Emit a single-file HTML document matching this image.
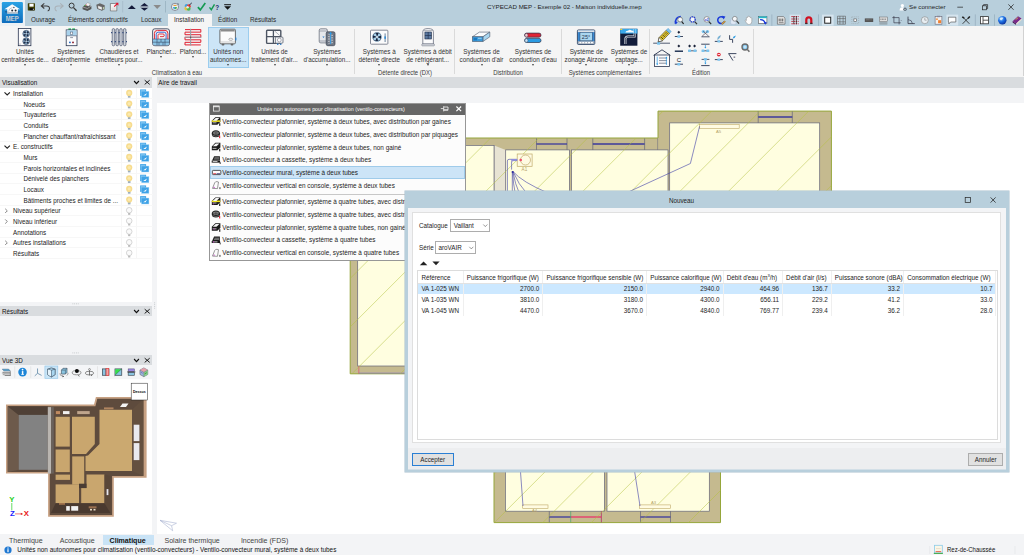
<!DOCTYPE html>
<html lang="fr">
<head>
<meta charset="utf-8">
<title>CYPECAD MEP - Exemple 02 - Maison individuelle.mep</title>
<style>
*{box-sizing:border-box;margin:0;padding:0}
html,body{width:1024px;height:555px;overflow:hidden;background:#fff}
body{font-family:"Liberation Sans",sans-serif;font-size:6.3px;color:#1e1e1e;position:relative;line-height:1}
.abs{position:absolute}
.t{position:absolute;white-space:nowrap;line-height:8px;height:8px}
.c{transform:translateX(-50%);text-align:center}
svg{position:absolute;overflow:visible}
sup{font-size:4.2px;line-height:0;vertical-align:baseline;position:relative;top:-2.2px}
/* header */
#hdr{position:absolute;left:0;top:0;width:1024px;height:26px;background:#b8cfdc}
#logobg{position:absolute;left:0;top:0;width:24.8px;height:26px;background:#ecf1f5}
#tabact{position:absolute;left:168px;top:14px;width:44px;height:12px;background:#f5f5f5}
.tab{position:absolute;top:15.6px;white-space:nowrap;line-height:8px;color:#2b2b2b}
/* ribbon */
#rib{position:absolute;left:0;top:26px;width:1024px;height:51px;background:#f5f5f5}
.rsep{position:absolute;top:3px;width:1px;height:45px;background:#dadada}
.rl{position:absolute;top:22.2px;white-space:nowrap;line-height:8.1px;text-align:center;transform:translateX(-50%);color:#333}
.rg{position:absolute;top:42.9px;white-space:nowrap;line-height:8px;transform:translateX(-50%) scaleX(0.94);color:#3a3a3a;font-size:6.3px}
.dd{position:absolute;width:0;height:0;border-left:1.9px solid transparent;border-right:1.9px solid transparent;border-top:2px solid #444;transform:translateX(-50%)}
.bt{position:absolute;top:1.4px;white-space:nowrap;line-height:9px;font-size:7.05px;color:#444}
/* panels */
.phdr{position:absolute;height:10.4px;background:#d9dcdf}
.phdr .t{top:1.8px;left:2px;color:#111}
</style>
</head>
<body>
<!-- HEADER -->
<div id="hdr">
<div id="logobg"></div>
<div id="tabact"></div>
<div class="tab" style="left:31px">Ouvrage</div>
<div class="tab" style="left:68px">Éléments constructifs</div>
<div class="tab" style="left:141px">Locaux</div>
<div class="tab" style="left:174px">Installation</div>
<div class="tab" style="left:218px">Édition</div>
<div class="tab" style="left:250px">Résultats</div>
<div class="t" style="left:487px;top:3px;font-size:6.2px">CYPECAD MEP - Exemple 02 - Maison individuelle.mep</div>
<div class="t" style="left:909px;top:3px;font-size:6.2px">Se connecter</div>
</div>
<svg id="hicons" width="1024" height="26" viewBox="0 0 1024 26" style="left:0;top:0">
<defs><linearGradient id="lg" x1="0" y1="0" x2="0" y2="1"><stop offset="0" stop-color="#2aa2e4"/><stop offset="1" stop-color="#0e6cbc"/></linearGradient></defs>
<rect x="1.85" y="1.95" width="21.05" height="21.15" rx="1.2" fill="url(#lg)"/>
<path d="M4.4 9.2 L12.2 4.3 L20.1 9.2 L17.9 9.2 L17.9 13.4 H7.2 V9.2 Z" fill="#fafbfc"/>
<path d="M7.2 12 H17.9 V13.5 H7.2 Z" fill="#b9c0c8"/><path d="M4.8 11.2 H7.2 V12.4 H5.4 Z M17.9 11.2 H19.8 L19.2 12.4 H17.9 Z" fill="#1a5a94"/>
<path d="M8.6 11.6 Q8.8 8.2 12.4 7.6" fill="none" stroke="#8a929c" stroke-width="0.5"/>
<circle cx="12.2" cy="10.5" r="1" fill="#1e2630"/><circle cx="15.6" cy="10.5" r="1" fill="#1e2630"/><circle cx="13.9" cy="7.6" r="0.75" fill="#4a525c"/>
<text x="12.25" y="20.9" font-size="7.4" font-weight="bold" text-anchor="middle" fill="#f2f4f6" stroke="#2a5a86" stroke-width="0.2" font-family="Liberation Sans, sans-serif" textLength="12.9" lengthAdjust="spacingAndGlyphs">MEP</text>
<g transform="translate(31.4 6.85)"><rect x="-3.6" y="-3.7" width="7.2" height="7.4" rx="0.5" fill="#3e3e04"/><rect x="-2" y="-3.1" width="4.2" height="2.9" fill="#fff"/><rect x="-1.8" y="1.3" width="4.4" height="2.1" fill="#0a0a0a"/><rect x="1.5" y="1.8" width="0.8" height="1.3" fill="#e8e8e8"/></g>
<g transform="translate(45.5 6.9)"><path d="M-1.2 -3.6 L-4.2 -1 L-1.2 1.6 M-4 -1 H1 Q4 -1 4 1.6 Q4 3.6 2.2 4" fill="none" stroke="#3c3c3c" stroke-width="1.05"/></g>
<g transform="translate(59 6.9)"><path d="M1.2 -3.6 L4.2 -1 L1.2 1.6 M4 -1 H-1 Q-4 -1 -4 1.6 Q-4 3.6 -2.2 4" fill="none" stroke="#a9b1b7" stroke-width="1.05"/></g>
<g transform="translate(72.8 6.9)"><circle cx="-1.2" cy="-1.3" r="2.5" fill="none" stroke="#3a3a3a" stroke-width="1"/><path d="M0.7 0.7 L3.8 3.9" stroke="#3a3a3a" stroke-width="1.3"/></g>
<g transform="translate(87 6.9)"><path d="M-4.4 0 L-1 -2.6 L4.4 -1 L4.4 2 L0.4 4.2 L-4.4 2.4 Z" fill="#555"/><path d="M-2.2 -1.6 L0.6 -4.2 L3.4 -3.2 L1.8 -0.6 Z" fill="#f2f2f2" stroke="#666" stroke-width="0.3"/><path d="M-4.4 0 L0.4 1.6 L4.4 -1" fill="none" stroke="#ddd" stroke-width="0.5"/><circle cx="-2" cy="-1.4" r="0.6" fill="#3c3"/><circle cx="-0.9" cy="-1.9" r="0.5" fill="#e33"/></g>
<g transform="translate(100.5 6.9)"><path d="M-4.2 -2.2 L-0.6 -3.6 L4.2 -1.6 L4.2 2.4 L1.4 3.8 L-3.4 1.8 Z" fill="#666"/><path d="M-2.6 -1.4 L1.6 0.2 L1.6 3.2 L-2.6 1.6 Z" fill="#eee" stroke="#444" stroke-width="0.3"/><path d="M2.4 0.4 L3.8 -0.2 V2 L2.4 2.6 Z" fill="#bca"/></g>
<g transform="translate(114 6.9)"><path d="M-3.6 -3.4 H1.4 L2.8 -2 V4 H-3.6 Z" fill="#f4f4f4" stroke="#555" stroke-width="0.6"/><path d="M0.2 -0.2 L3 -3" stroke="#e0102a" stroke-width="1.2"/><path d="M1.4 -4.2 H4.4 V-1.2 Z" fill="#e0102a"/><path d="M-2.4 1.2 H1.6 M-2.4 2.4 H1.6" stroke="#bbb" stroke-width="0.4"/></g>
<rect x="122.5" y="1" width="0.6" height="11.5" fill="#9db3c2"/>
<g transform="translate(131.8 6.9)"><path d="M-4 2.2 L0 -1.6 L4 2.2 Z" fill="#141a3a"/></g>
<g transform="translate(144.4 6.9)"><path d="M-3.8 -0.9 L0 -3.9 L3.8 -0.9 Z M-3.8 0.9 L0 3.9 L3.8 0.9 Z" fill="#141a3a"/><rect x="-3.8" y="-0.5" width="7.6" height="1" fill="#141a3a"/><rect x="-3.8" y="-0.95" width="7.6" height="0.45" fill="#dfe9f0"/><rect x="-3.8" y="0.5" width="7.6" height="0.45" fill="#dfe9f0"/></g>
<g transform="translate(157.2 6.9)"><path d="M-3.8 -2 L0 2.2 L3.8 -2 Z" fill="#8a8a8a"/></g>
<rect x="165.1" y="1" width="0.6" height="11.5" fill="#8ea6b6"/>
<g transform="translate(175 6.9)"><circle r="3.6" fill="#e8eef2" stroke="#556" stroke-width="0.6"/><path d="M-2 -1 A2.4 2.4 0 0 1 2 -1 Z" fill="#e8a040"/><path d="M-2 0 A2.4 2.4 0 0 0 0 2.4 V0 Z" fill="#40a0e0"/><path d="M0 2.4 A2.4 2.4 0 0 0 2 0 H0 Z" fill="#50b850"/><path d="M2.6 -3.4 L3.8 -2.6" stroke="#334" stroke-width="0.7"/></g>
<g transform="translate(187.6 6.9)"><circle cx="-1" cy="-1" r="2" fill="#40a0e0"/><circle cx="1.2" cy="-0.6" r="2" fill="#e84040"/><circle cx="-1.2" cy="1.6" r="2" fill="#e8c040"/><circle cx="1" cy="1.8" r="2" fill="#50b850"/><circle cx="0" cy="0.4" r="1.2" fill="#dfe9f0"/><path d="M1.5 -1.6 L4.2 -4" stroke="#223" stroke-width="0.9"/></g>
<g transform="translate(201.5 6.9)"><path d="M-3.6 0.2 L-1.2 3 L3.8 -3.8" fill="none" stroke="#159a52" stroke-width="1.7"/></g>
<g transform="translate(213.5 6.9)"><path d="M-4 0.4 L-2.2 2.8 L1 -2.6" fill="none" stroke="#159a52" stroke-width="1.4"/></g>
<text x="215.2" y="10.4" font-size="6.4" font-weight="bold" fill="#1a2a6a" font-family="Liberation Sans, sans-serif">?</text>
<g transform="translate(227.6 6.9)"><rect x="-3.4" y="-2.7" width="6.8" height="1" fill="#111"/><path d="M-3.4 -0.7 L0 2.9 L3.4 -0.7 Z" fill="#111"/></g>
<g transform="translate(903 7.2)"><circle cx="-0.6" cy="-1.6" r="1.6" fill="#fff"/><path d="M-3.4 3.2 Q-3.4 0 -0.6 0 Q2.2 0 2.2 3.2 Z" fill="#fff"/><circle cx="2" cy="2" r="1.7" fill="#5a6a78"/><rect x="1.3" y="1.7" width="1.4" height="0.7" fill="#fff"/></g>
<path d="M957.3 7.2 H963" stroke="#222" stroke-width="0.7"/>
<rect x="982.4" y="5.8" width="4" height="4" fill="none" stroke="#222" stroke-width="0.7"/><path d="M983.6 5.8 V4.6 H987.6 V8.6 H986.4" fill="none" stroke="#222" stroke-width="0.7"/>
<path d="M1008.4 4.4 L1013.6 9.8 M1013.6 4.4 L1008.4 9.8" stroke="#222" stroke-width="0.75"/>
<rect x="789.6" y="14.6" width="11" height="11" fill="#d5e4ee"/>
<rect x="822" y="14.6" width="11.6" height="11" fill="#d5e4ee"/>
<rect x="946.4" y="14.6" width="11.8" height="11" fill="#d5e4ee"/>
<rect x="771.6" y="14.4" width="0.6" height="11.4" fill="#8ea6b6"/>
<rect x="818.3000000000001" y="14.4" width="0.6" height="11.4" fill="#8ea6b6"/>
<rect x="974.9000000000001" y="14.4" width="0.6" height="11.4" fill="#8ea6b6"/>
<rect x="994.3000000000001" y="14.4" width="0.6" height="11.4" fill="#8ea6b6"/>
<g transform="translate(679.4 20.2)"><path d="M-4 3.6 Q-4.4 -3.4 1.4 -3.8" fill="none" stroke="#1a3ad8" stroke-width="1.5"/><path d="M-4.6 1 L-3.6 4.2 L-1.6 1.8 Z" fill="#1a3ad8"/><circle cx="0.8" cy="-0.6" r="2.4" fill="#f6f8fa" stroke="#555" stroke-width="0.6"/><path d="M2.4 1.4 L4.2 3.8" stroke="#222" stroke-width="1.2"/></g>
<g transform="translate(693 20.2)"><circle cx="-0.4" cy="-0.8" r="2.8" fill="#f6f8fa" stroke="#777" stroke-width="0.7"/><path d="M1.7 1.4 L4 4" stroke="#333" stroke-width="1.2"/><circle cx="-0.4" cy="-0.8" r="2.6" fill="none" stroke="#2040e0" stroke-width="1.3" stroke-dasharray="1.3 0.9"/></g>
<g transform="translate(707.2 20.2)"><circle cx="-0.4" cy="-0.8" r="2.8" fill="#f6f8fa" stroke="#777" stroke-width="0.7"/><path d="M1.7 1.4 L4 4" stroke="#333" stroke-width="1.2"/><text x="-2.4" y="0.6" font-size="3.6" font-weight="bold" fill="#2040d0" font-family="Liberation Sans, sans-serif">x2</text></g>
<g transform="translate(721 20.2)"><path d="M2.6 -2.4 A3.4 3.4 0 1 0 3.2 1.4" fill="none" stroke="#1a3ad8" stroke-width="1.5"/><path d="M1 -4.4 L4.4 -3.6 L2.6 -0.8 Z" fill="#1a3ad8"/><path d="M0.4 3.4 L3.6 0.6 L4.6 1.6 L1.4 4.4 Z" fill="#d8a038" stroke="#7a5a18" stroke-width="0.3"/></g>
<g transform="translate(734.8 20.2)"><rect x="-4" y="-1" width="5" height="5" fill="#dfe8f4" stroke="#8aa0c8" stroke-width="0.4" stroke-dasharray="0.8 0.6"/><circle cx="0" cy="-1.4" r="2.4" fill="#f6f8fa" stroke="#777" stroke-width="0.7"/><path d="M1.8 0.6 L4.2 3.4" stroke="#333" stroke-width="1.2"/></g>
<g transform="translate(749 20.2)"><path d="M-2.6 0.4 V-2.6 Q-2 -3.4 -1.4 -2.6 V-3.6 Q-0.7 -4.4 0 -3.6 V-3.2 Q0.7 -4 1.4 -3.2 V-2.4 Q2.1 -3 2.8 -2.2 V1.6 Q2.6 4 0.6 4.2 H-0.6 Q-2 4 -3 2 L-4 0.2 Q-3.4 -0.6 -2.6 0.4 Z" fill="#fdfdfd" stroke="#888" stroke-width="0.5"/></g>
<g transform="translate(762.7 20.2)"><rect x="-4.2" y="-3.8" width="8.4" height="7" fill="#fff" stroke="#555" stroke-width="0.6"/><rect x="-4.2" y="-3.8" width="8.4" height="1.8" fill="#28b8c8"/><path d="M-2.6 -0.6 Q2 -0.8 2.6 3.6" fill="none" stroke="#1a3ad8" stroke-width="1.2"/><path d="M1 2 L2.8 4.6 L4.2 1.8 Z" fill="#1a3ad8"/></g>
<g transform="translate(781.2 20.2)"><path d="M-3.8 -3.6 H2.2 L3.8 -2 V4 H-3.8 Z" fill="#e8e8e8" stroke="#555" stroke-width="0.6"/><path d="M-2.6 -1 H2.6 M-2.6 0.6 H2.6" stroke="#333" stroke-width="0.9" stroke-dasharray="1.2 0.5"/><path d="M-2.4 2.4 H2.4" stroke="#666" stroke-width="0.7"/></g>
<g transform="translate(795 20.2)"><path d="M-3.6 -3.6 H3.6 M-3.6 -1.2 H3.6 M-3.6 1.2 H3.6 M-3.6 3.6 H3.6" stroke="#c01828" stroke-width="1" stroke-dasharray="1.4 0.7"/><path d="M-1.2 -4 V4 M1.4 -4 V4" stroke="#3a2a2a" stroke-width="0.8"/></g>
<g transform="translate(808.8 20.2)"><path d="M-3.6 3.8 V-0.4 A3.6 3.6 0 0 1 3.6 -0.4 V3.8 H1.4 V-0.2 A1.4 1.4 0 0 0 -1.4 -0.2 V3.8 Z" fill="#d01020"/><rect x="-3.6" y="2.6" width="2.2" height="1.3" fill="#333"/><rect x="1.4" y="2.6" width="2.2" height="1.3" fill="#333"/></g>
<g transform="translate(827.7 20.2)"><rect x="-3" y="-3" width="6" height="6" fill="#fff" stroke="#222" stroke-width="1"/></g>
<g transform="translate(841.5 20.2)"><path d="M-4 -1.6 H4 M-4 1.6 H4 M-1.6 -4 V4 M1.6 -4 V4 M-4 -4 H4 V4 H-4 Z" fill="none" stroke="#555" stroke-width="0.55"/></g>
<g transform="translate(855.2 20.2)"><rect x="-1.3" y="-1.3" width="2.6" height="2.6" fill="#fff" stroke="#555" stroke-width="0.6"/><rect x="-3.4" y="-3.4" width="6.8" height="6.8" fill="none" stroke="#888" stroke-width="0.5" stroke-dasharray="0.7 1.3"/></g>
<g transform="translate(869 20.2)"><rect x="-4.2" y="-1.8" width="8.4" height="3.6" fill="#555"/><path d="M-3 -0.4 H3" stroke="#ccc" stroke-width="0.5" stroke-dasharray="0.6 0.6"/></g>
<g transform="translate(883.4 20.2)"><rect x="-4" y="-3.2" width="8" height="4.6" fill="#ddd" stroke="#666" stroke-width="0.5"/><path d="M-3 -1 H3" stroke="#555" stroke-width="0.8" stroke-dasharray="1 0.5"/><path d="M-4 2.6 H4 M-4 3.8 H4" stroke="#666" stroke-width="0.5"/></g>
<g transform="translate(896.5 20.2)"><path d="M-2.6 -4.2 V2.6 H4.2 M-4.2 -2.6 H2.6 V4.2" fill="none" stroke="#334" stroke-width="0.65"/><circle cx="4.6" cy="0.4" r="0.4" fill="#334"/></g>
<g transform="translate(911 20.2)"><path d="M-3 -3.6 V3.4 H3.8" fill="none" stroke="#334" stroke-width="0.8"/><path d="M-3 -0.6 Q1.2 -0.4 1.4 3.4" fill="none" stroke="#334" stroke-width="0.6"/></g>
<g transform="translate(924.8 20.2)"><circle r="3.5" fill="#e8eef2" stroke="#888" stroke-width="0.6"/><path d="M0 0 V-2.4 M0 0 H1.8" stroke="#777" stroke-width="0.5"/></g>
<g transform="translate(938.5 20.2)"><rect x="-3.4" y="-3.8" width="6.8" height="7.8" fill="#f0f0f0" stroke="#667" stroke-width="0.6"/><rect x="-1.6" y="-4.4" width="3.2" height="1.4" fill="#889"/><rect x="-0.4" y="0" width="3" height="3" fill="#f08030"/><rect x="-2.6" y="-1.8" width="2" height="1.6" fill="#f0a060"/></g>
<g transform="translate(952 20.2)"><path d="M-3.6 -3 H3.8 V1.8 H-1.4 L-3.2 3.8 V1.8 H-3.6 Z" fill="#fff" stroke="#444" stroke-width="0.6"/></g>
<g transform="translate(966 20.2)"><path d="M-3.2 -3.2 L3.4 3.6 M3.4 -3.4 L-3.4 3.6" stroke="#222" stroke-width="0.8"/><path d="M-3.8 -3.4 L-1.8 -2.2 M3.8 -3.8 L2 -1.8" stroke="#222" stroke-width="1.5"/></g>
<g transform="translate(984.4 20.2)"><rect x="-4" y="-3.6" width="8" height="7.2" fill="#fff" stroke="#333" stroke-width="0.8"/><path d="M-1.4 -3.6 V3.6 M-1.4 0 H4" stroke="#333" stroke-width="0.8"/></g>
<defs><radialGradient id="gl" cx="0.35" cy="0.3" r="0.8"><stop offset="0" stop-color="#8fd0ff"/><stop offset="0.5" stop-color="#1a6ae0"/><stop offset="1" stop-color="#0a2a90"/></radialGradient></defs>
<g transform="translate(1002.3 20.2)"><circle r="4.2" fill="url(#gl)"/><path d="M-2.6 -1.6 Q-1 -3.4 1 -2.4 Q0.4 -0.6 -1 0 Q-2.4 0 -2.6 -1.6 Z" fill="#e8f4ff" opacity="0.85"/></g>
<g transform="translate(1017 20.2)"><path d="M-4.4 1 L1 -4 L4.6 -1.6 L-0.8 3.4 Z" fill="#7a2a8a"/><path d="M-4.4 1 L-0.8 3.4 L-0.8 4.8 L-4.4 2.4 Z" fill="#4a1a5a"/><path d="M-0.8 3.4 L4.6 -1.6 V-0.2 L-0.8 4.8 Z" fill="#e8e0d0"/><path d="M-1.4 -0.6 L1.2 -2.6" stroke="#e8c040" stroke-width="0.8"/></g>
</svg>
<!-- RIBBON -->
<div id="rib">
<div class="abs" style="left:208.4px;top:1.2px;width:40.2px;height:41px;background:#cce5f7;border:0.6px solid #9ccdee"></div>
<div class="rl" style="left:25px">Unités<br>centralisées de...</div><div class="dd" style="left:25px;top:38.3px"></div>
<div class="rl" style="left:71px">Systèmes<br>d'aérothermie</div><div class="dd" style="left:71px;top:38.3px"></div>
<div class="rl" style="left:119px">Chaudières et<br>émetteurs pour...</div><div class="dd" style="left:119px;top:38.3px"></div>
<div class="rl" style="left:161.4px">Plancher...</div><div class="dd" style="left:161.4px;top:30.2px"></div>
<div class="rl" style="left:193px">Plafond...</div><div class="dd" style="left:193px;top:30.2px"></div>
<div class="rl" style="left:228.3px">Unités non<br>autonomes...</div><div class="dd" style="left:228.3px;top:38.3px"></div>
<div class="rl" style="left:274.5px">Unités de<br>traitement d'air...</div><div class="dd" style="left:274.5px;top:38.3px"></div>
<div class="rl" style="left:327px">Systèmes<br>d'accumulation...</div><div class="dd" style="left:327px;top:38.3px"></div>
<div class="rl" style="left:379.3px">Systèmes à<br>détente directe</div><div class="dd" style="left:379.3px;top:38.3px"></div>
<div class="rl" style="left:427.7px">Systèmes à débit<br>de réfrigérant...</div><div class="dd" style="left:427.7px;top:38.3px"></div>
<div class="rl" style="left:481.5px">Systèmes de<br>conduction d'air</div><div class="dd" style="left:481.5px;top:38.3px"></div>
<div class="rl" style="left:533px">Systèmes de<br>conduction d'eau</div><div class="dd" style="left:533px;top:38.3px"></div>
<div class="rl" style="left:586.3px">Système de<br>zonage Airzone</div><div class="dd" style="left:586.3px;top:38.3px"></div>
<div class="rl" style="left:629px">Systèmes de<br>captage...</div><div class="dd" style="left:629px;top:38.3px"></div>
<div class="rsep" style="left:354.0px"></div>
<div class="rsep" style="left:454.0px"></div>
<div class="rsep" style="left:561.0px"></div>
<div class="rsep" style="left:649.0px"></div>
<div class="rsep" style="left:753.0px"></div>
<div class="rg" style="left:177px">Climatisation à eau</div>
<div class="rg" style="left:405px">Détente directe (DX)</div>
<div class="rg" style="left:507.5px">Distribution</div>
<div class="rg" style="left:605px">Systèmes complémentaires</div>
<div class="rg" style="left:701px">Édition</div>
</div>
<svg id="ricons" width="1024" height="51" viewBox="0 26 1024 51" style="left:0;top:26px">
<rect x="18.3" y="28.5" width="12.6" height="17.2" fill="#fbfbfc" stroke="#2a3650" stroke-width="0.8"/>
<circle cx="26.2" cy="33.7" r="3.4" fill="#8fb2cf" stroke="#1c2a44" stroke-width="0.5"/><path d="M26.2 33.7 L28.86 34.83 Q28.44 36.25 26.97 36.48 Z" fill="#1c2a44"/><path d="M26.2 33.7 L25.07 36.36 Q23.65 35.94 23.42 34.47 Z" fill="#1c2a44"/><path d="M26.2 33.7 L23.54 32.57 Q23.96 31.15 25.43 30.92 Z" fill="#1c2a44"/><path d="M26.2 33.7 L27.33 31.04 Q28.75 31.46 28.98 32.93 Z" fill="#1c2a44"/><circle cx="26.2" cy="33.7" r="0.75" fill="#dfe8f0"/>
<circle cx="26.2" cy="41.2" r="3.4" fill="#8fb2cf" stroke="#1c2a44" stroke-width="0.5"/><path d="M26.2 41.2 L28.86 42.33 Q28.44 43.75 26.97 43.98 Z" fill="#1c2a44"/><path d="M26.2 41.2 L25.07 43.86 Q23.65 43.44 23.42 41.97 Z" fill="#1c2a44"/><path d="M26.2 41.2 L23.54 40.07 Q23.96 38.65 25.43 38.42 Z" fill="#1c2a44"/><path d="M26.2 41.2 L27.33 38.54 Q28.75 38.96 28.98 40.43 Z" fill="#1c2a44"/><circle cx="26.2" cy="41.2" r="0.75" fill="#dfe8f0"/>
<path d="M20 43.6 V44.6" stroke="#2a3650" stroke-width="0.5"/>
<rect x="68.4" y="28.4" width="2.6" height="1.6" fill="#2eb860"/><rect x="72.2" y="28.4" width="2.8" height="1.6" fill="#2eb860"/>
<rect x="66.2" y="29.9" width="10.8" height="15.8" fill="#fbfbfc" stroke="#2a3650" stroke-width="0.8"/>
<rect x="66.6" y="30.3" width="10" height="5.4" fill="#a9d2ec"/><rect x="70.4" y="32" width="2.4" height="2.6" fill="#fff" stroke="#2a3650" stroke-width="0.4"/>
<path d="M66.4 35.8 H76.8" stroke="#2a3650" stroke-width="0.5"/><path d="M70.2 37.6 H73" stroke="#2a3650" stroke-width="0.5"/>
<circle cx="69.9" cy="42.4" r="0.95" fill="#2a6ac0"/><circle cx="73" cy="42.4" r="0.95" fill="#8a2030"/>
<rect x="112.20" y="28.6" width="2.5" height="17.2" rx="1.2" fill="#ced3dc" stroke="#2a3650" stroke-width="0.55"/>
<rect x="115.95" y="28.6" width="2.5" height="17.2" rx="1.2" fill="#ced3dc" stroke="#2a3650" stroke-width="0.55"/>
<rect x="119.70" y="28.6" width="2.5" height="17.2" rx="1.2" fill="#ced3dc" stroke="#2a3650" stroke-width="0.55"/>
<rect x="123.45" y="28.6" width="2.5" height="17.2" rx="1.2" fill="#ced3dc" stroke="#2a3650" stroke-width="0.55"/>
<path d="M111 32.6 H127 M111 41.6 H127" stroke="#3a5080" stroke-width="1.3" stroke-dasharray="1.25 2.5"/>
<rect x="152.6" y="28.8" width="16.9" height="16.9" rx="2.2" fill="#f2f2f2" stroke="#2a3650" stroke-width="0.8"/>
<path d="M153 39 H169.1 V43.6 Q169.1 45.3 167.4 45.3 H154.7 Q153 45.3 153 43.6 Z" fill="#8cc4e6"/>
<path d="M153 39 H169.1 M153 42.2 H169.1 M157 39 V45.3 M161 39 V42.2 M165 39 V45.3 M159 42.2 V45.3 M163 42.2 V45.3" stroke="#2a3650" stroke-width="0.5" fill="none"/>
<path d="M154.4 39 V33.4 Q154.4 30.4 157.4 30.4 H165 Q167.9 30.4 167.9 33.4 V39" fill="none" stroke="#e02838" stroke-width="1"/>
<path d="M156.2 39 V34.2 Q156.2 32.2 158.2 32.2 H164.2 Q166.1 32.2 166.1 34.2 V39" fill="none" stroke="#2a5ad0" stroke-width="0.9"/>
<path d="M158 39 V35.2 Q158 34 159.2 34 H163 Q164.3 34 164.3 35.2 Q164.3 36.6 163 36.6 H160" fill="none" stroke="#e02838" stroke-width="0.9"/>
<g stroke="#e02838" stroke-width="1.05" fill="none">
<path d="M185 29.60 H200.8"/>
<path d="M185 32.15 H200.8"/>
<path d="M185 34.70 H200.8"/>
<path d="M185 37.25 H200.8"/>
<path d="M185 39.80 H200.8"/>
<path d="M185 42.35 H200.8"/>
<path d="M185 44.90 H200.8"/>
<path d="M200.8 29.6 V32.15 M185 32.15 V34.7 M200.8 34.7 V37.25 M185 37.25 V39.8 M200.8 39.8 V42.35 M185 42.35 V44.9"/>
</g>
<path d="M190.6 28.8 V45.6 M184.4 37.3 H201.4" stroke="#9aa0a8" stroke-width="1.1"/><circle cx="190.6" cy="37.3" r="0.7" fill="#555"/>
<rect x="219.9" y="29.2" width="15.5" height="14.6" rx="1" fill="#fbfbfb" stroke="#4a4a4a" stroke-width="0.8"/>
<rect x="220.6" y="29.6" width="14.1" height="1.9" fill="#8a8a8a"/>
<rect x="221.6" y="43.8" width="2.8" height="1.8" rx="0.8" fill="#666"/><rect x="230.6" y="43.8" width="2.8" height="1.8" rx="0.8" fill="#666"/>
<ellipse cx="230.8" cy="39.3" rx="2" ry="1.1" fill="#f4f4f4" stroke="#555" stroke-width="0.4"/>
<rect x="235.2" y="37.6" width="1.2" height="2.8" fill="#2a7ac8"/><path d="M220.4 42 H235" stroke="#999" stroke-width="0.5"/>
<rect x="266.6" y="30.2" width="14.2" height="13.2" rx="0.8" fill="#fafafa" stroke="#4d5563" stroke-width="1.4"/>
<path d="M266.4 36.6 H281 M273.4 30 V43.6" stroke="#4d5563" stroke-width="1.3"/>
<path d="M274.6 31 L279.8 35.6" stroke="#8a919c" stroke-width="0.7"/>
<rect x="275.4" y="37" width="7.6" height="6.2" rx="1" fill="#f2f4f6" stroke="#4d5563" stroke-width="0.7"/><circle cx="279.3" cy="40" r="1.9" fill="#fff" stroke="#667" stroke-width="0.5"/>
<rect x="277" y="43.6" width="1.4" height="1.3" fill="#2a7ac8"/><rect x="280" y="43.6" width="1.4" height="1.3" fill="#2a7ac8"/>
<rect x="319.2" y="28.8" width="8.2" height="14.1" rx="1.6" fill="#e6e8ec" stroke="#5a6270" stroke-width="0.7"/>
<path d="M319.4 31 H327.2 M319.4 41 H327.2" stroke="#5a6270" stroke-width="0.5"/><path d="M322.4 36.6 H324.6 L323.5 38 Z" fill="#2a7ac8"/>
<rect x="326.2" y="31.8" width="8.8" height="13.9" rx="1.6" fill="#707784" stroke="#3a4250" stroke-width="0.7"/>
<path d="M328 34.2 L333 35.4 L328 36.6 L333 37.8 L328 39 L333 40.2 L328 41.4 L333 42.6 L328 43.8" fill="none" stroke="#d8dce2" stroke-width="0.45"/>
<path d="M330.6 44 V33" stroke="#2a9ae8" stroke-width="0.9"/><path d="M329.2 34 L330.6 31.8 L332 34 Z" fill="#2a9ae8"/>
<rect x="370.5" y="30.2" width="17.4" height="14" rx="0.8" fill="#fbfbfc" stroke="#6a7080" stroke-width="0.8"/>
<circle cx="377" cy="36.9" r="4.6" fill="#16223c" stroke="#a9d2ec" stroke-width="0.5"/><path d="M377 36.9 L380.60 38.42 Q380.04 40.36 378.05 40.67 Z" fill="#a9d2ec"/><path d="M377 36.9 L375.48 40.50 Q373.54 39.94 373.23 37.95 Z" fill="#a9d2ec"/><path d="M377 36.9 L373.40 35.38 Q373.96 33.44 375.95 33.13 Z" fill="#a9d2ec"/><path d="M377 36.9 L378.52 33.30 Q380.46 33.86 380.77 35.85 Z" fill="#a9d2ec"/><circle cx="377" cy="36.9" r="1.01" fill="#dfe8f0"/>
<rect x="384.4" y="33.4" width="1.5" height="8.6" fill="#9ab" /><rect x="384.4" y="36.4" width="1.5" height="2.4" fill="#2a8ad8"/>
<path d="M422.8 44 V31.6 Q422.8 28.6 428.1 28.6 Q433.4 28.6 433.4 31.6 V44 Z" fill="#fbfbfc" stroke="#6a7080" stroke-width="0.8"/>
<path d="M423 30.6 H433.2" stroke="#9aa0aa" stroke-width="0.8"/>
<rect x="424.9" y="32" width="6.6" height="7" fill="#5a78a0" stroke="#1c2a44" stroke-width="0.6"/><path d="M428.2 32 V39 M424.9 35.5 H431.5" stroke="#1c2a44" stroke-width="0.6"/>
<rect x="421.8" y="44" width="12.6" height="1.8" rx="0.6" fill="#e8eaee" stroke="#6a7080" stroke-width="0.6"/>
<path d="M472.4 36.8 L479.4 32.1 H489.8 L482.9 36.8 Z" fill="#fbfcfd" stroke="#4a566a" stroke-width="0.6"/>
<path d="M482.9 36.8 L489.8 32.1 V36.8 L482.9 41.5 Z" fill="#a9d6f0" stroke="#4a566a" stroke-width="0.6"/>
<rect x="472.4" y="36.8" width="10.5" height="4.7" fill="#3a9ada" stroke="#4a566a" stroke-width="0.6"/>
<rect x="473.6" y="37.9" width="3.4" height="2.4" fill="#1a78c0"/><path d="M478 38.3 H481.6" stroke="#e8f4fc" stroke-width="0.6"/>
<rect x="524.6" y="33.1" width="16.4" height="4.1" rx="2" fill="#e02434" stroke="#2a3650" stroke-width="0.7"/><rect x="524.9" y="33.4" width="3" height="3.5" rx="1.5" fill="#f0c8cc" stroke="#2a3650" stroke-width="0.4"/>
<rect x="524.6" y="38.4" width="16.4" height="4.1" rx="2" fill="#2a9ae2" stroke="#2a3650" stroke-width="0.7"/><rect x="524.9" y="38.7" width="3" height="3.5" rx="1.5" fill="#c8e2f4" stroke="#2a3650" stroke-width="0.4"/>
<rect x="577.4" y="29.9" width="17.4" height="14.5" rx="1" fill="#3a8ad2" stroke="#2a3650" stroke-width="0.8"/>
<rect x="577.8" y="30.3" width="16.6" height="1.8" fill="#dde2e8"/><rect x="577.8" y="41.2" width="16.6" height="2.8" fill="#aab2be"/>
<rect x="580" y="32.4" width="12.2" height="8.4" fill="#a9d6f0" stroke="#2a3650" stroke-width="0.4"/>
<text x="586" y="38.9" font-size="5.6" text-anchor="middle" fill="#2a3650" font-family="Liberation Sans, sans-serif">25°</text>
<path d="M579.4 42.6 H593" stroke="#fff" stroke-width="1.2" stroke-dasharray="1.9 1"/>
<rect x="620.2" y="28.8" width="17.2" height="16.9" fill="#121c3a"/>
<rect x="620.2" y="28.8" width="17.2" height="4.8" fill="#3aa8ea"/><rect x="620.2" y="28.8" width="2" height="1.2" fill="#f0d040"/>
<path d="M625.4 32.6 Q625.8 30.4 628 30.8 Q629.6 29 631.6 30.6 Q634 30.4 634 32.6 Z" fill="#f4f8fc"/>
<path d="M634.6 33.6 V36.6 H628 Q625.4 36.6 625.4 39.2 V44" fill="none" stroke="#f4f6f8" stroke-width="2"/><path d="M634.6 33.6 V36.6 H628 Q625.4 36.6 625.4 39.2 V44" fill="none" stroke="#121c3a" stroke-width="0.8"/>
<path d="M633.6 29 V33.4 M635.6 29 V33.4" stroke="#cfe6f6" stroke-width="0.5"/>
<path d="M653.2 43.2 H670" stroke="#2a3650" stroke-width="0.8"/><rect x="657.10" y="41.90" width="3" height="2.8" rx="0.5" fill="#7cc4ee"/>
<g transform="translate(658.2 41.8) rotate(-46)"><path d="M0 0 L3.6 -2.3 H14 V2.3 H3.6 Z" fill="#f2d22e" stroke="#1a1a1a" stroke-width="0.5"/><path d="M0 0 L3.6 -2.3 V2.3 Z" fill="#fff" stroke="#1a1a1a" stroke-width="0.45"/><path d="M4.6 -0.75 H13.4 M4.6 0.75 H13.4" stroke="#1a1a1a" stroke-width="0.85" stroke-dasharray="1.6 0.8"/><rect x="14" y="-2.3" width="2.5" height="4.6" fill="#7cc4ee" stroke="#3a86c0" stroke-width="0.35"/></g>
<path d="M653.6 55.4 L662 49.8 L670.4 55.4" fill="none" stroke="#2a3650" stroke-width="0.9"/>
<rect x="654.6" y="55" width="14.8" height="11.4" fill="#fbfbfc" stroke="#2a3650" stroke-width="0.8"/>
<path d="M659 58 H667 M659 60.6 H667 M659 63.2 H667" stroke="#2a3650" stroke-width="0.55"/>
<path d="M657.2 56.6 V64.6 M666.4 57 V65" stroke="#2a9ae2" stroke-width="0.7"/><path d="M656.2 63.4 L657.2 65.2 L658.2 63.4 Z M665.4 58.2 L666.4 56.4 L667.4 58.2 Z" fill="#2a9ae2"/>
<path d="M677.3499999999999 32.2 L678.8 30.750000000000004 L680.25 32.2 L678.8 33.650000000000006 Z" fill="#1a2238"/><path d="M674.8 36.5 H683" stroke="#2a3650" stroke-width="0.9"/><rect x="677.40" y="35.30" width="2.8" height="2.4" rx="0.5" fill="#7cc4ee"/>
<path d="M677.3499999999999 46 L678.8 44.55 L680.25 46 L678.8 47.45 Z" fill="#1a2238"/><path d="M674.8 51.2 H683" stroke="#14284a" stroke-width="1.4"/>
<text x="678.8" y="62.4" font-size="6" text-anchor="middle" fill="#111" font-family="Liberation Sans, sans-serif">C</text><path d="M674.8 64.2 H683" stroke="#2a3650" stroke-width="0.9"/><rect x="677.40" y="63.00" width="2.8" height="2.4" rx="0.5" fill="#7cc4ee"/>
<path d="M688.15 46 L689.6 44.55 L691.0500000000001 46 L689.6 47.45 Z" fill="#1a2238"/><path d="M693.15 46 L694.6 44.55 L696.0500000000001 46 L694.6 47.45 Z" fill="#1a2238"/><path d="M688 50.8 H696.6" stroke="#2a3650" stroke-width="0.8"/><rect x="688.10" y="49.50" width="3" height="2.6" rx="0.5" fill="#7cc4ee"/><rect x="693.50" y="49.50" width="3" height="2.6" rx="0.5" fill="#7cc4ee"/>
<circle cx="703.4" cy="31.6" r="1.7" fill="#7cc4ee"/><circle cx="707.4" cy="31.6" r="1.7" fill="#7cc4ee"/><path d="M702 36.4 L707.6 31.2 M708.8 36.4 L703.2 31.2" stroke="#334" stroke-width="0.6"/><path d="M701.4 36.8 H709.6" stroke="#2a3650" stroke-width="0.8"/>
<path d="M701.2 44.2 H709.6" stroke="#2a3650" stroke-width="0.9"/><path d="M705.4 45 V47.6" stroke="#2a9ae2" stroke-width="0.7"/><path d="M704.4 47 L705.4 48.6 L706.4 47 Z" fill="#2a9ae2"/><path d="M702 50.8 H709" stroke="#2a3650" stroke-width="0.8"/><rect x="701.50" y="49.60" width="3" height="2.4" rx="0.5" fill="#7cc4ee"/><rect x="706.30" y="49.60" width="3" height="2.4" rx="0.5" fill="#7cc4ee"/>
<path d="M701.6 59.4 H709.4" stroke="#2a3650" stroke-width="0.8"/><rect x="703.90" y="58.00" width="3" height="2.4" rx="0.5" fill="#7cc4ee"/><path d="M705.4 60.6 V63.4" stroke="#2a9ae2" stroke-width="0.7"/><path d="M704.4 62.8 L705.4 64.4 L706.4 62.8 Z" fill="#2a9ae2"/><path d="M701.2 65.6 H709.6" stroke="#2a3650" stroke-width="0.9"/>
<path d="M714.8 41.4 H722.8" stroke="#2a3650" stroke-width="0.9"/><rect x="717.40" y="40.20" width="2.8" height="2.4" rx="0.5" fill="#7cc4ee"/><path d="M717.6 39.6 Q717.4 36.4 720.6 35.6 Q720 38.4 717.6 39.6 Z" fill="#7cc4ee" stroke="#4a7090" stroke-width="0.3"/>
<circle cx="718.8" cy="54.6" r="1.9" fill="#e02434"/><rect x="717.6" y="54.2" width="2.4" height="0.8" fill="#fff"/><path d="M714.8 59.6 H722.8" stroke="#2a3650" stroke-width="0.9"/><rect x="717.40" y="58.40" width="2.8" height="2.4" rx="0.5" fill="#7cc4ee"/>
<path d="M729.6 35.2 V39.4 H732.6 V42.8" fill="none" stroke="#2a3650" stroke-width="0.9"/><path d="M732.6 38.4 Q733 36 736 35.4 Q735.4 38 732.6 38.4 Z" fill="#2a9ae2"/>
<path d="M728.6 53.6 H736.4 M728.6 53.6 L733 60.6" fill="none" stroke="#2a3650" stroke-width="0.9"/><rect x="733.6" y="56.4" width="1.6" height="1.6" fill="#889" />
<circle cx="745" cy="47" r="3" fill="#7cc4ee" stroke="#6a6a6a" stroke-width="1.35"/><path d="M743.4 47 H746.6 M745 45.4 V48.6" stroke="#fff" stroke-width="0.7"/><path d="M747.4 49.6 L749.4 51.8" stroke="#6a6a6a" stroke-width="1.5"/>
</svg>
<div class="abs" id="redge" style="left:1023.2px;top:26px;width:0.8px;height:49.6px;background:#d2d2d2"></div>
<!-- PANELS -->
<div class="abs" style="left:0;top:77px;width:1024px;height:478px;background:#f3f4f6"></div>
<div class="phdr" style="left:0;top:77px;width:152px;height:10.6px"><div class="t">Visualisation</div><svg width="20" height="10.6" viewBox="0 0 20 10.6" style="left:132px;top:0"><path d="M2.1 4 L4.5 6.6 L6.9 4" fill="none" stroke="#111" stroke-width="1.15"/><path d="M12.7 3.2 L17.7 7.4 M17.7 3.2 L12.7 7.4" stroke="#111" stroke-width="0.95"/></svg></div>
<div class="phdr" style="left:156.7px;top:77px;width:868px;height:10.6px"><div class="t" style="left:1.6px">Aire de travail</div></div>
<div class="abs" id="tree" style="left:0;top:88px;width:152px;height:214px;background:#fff">
<div class="abs" style="left:121px;top:0;width:0.6px;height:170.6px;background:#f6f6f6"></div>
<div class="abs" style="left:136px;top:0;width:0.6px;height:170.6px;background:#f6f6f6"></div>
<div class="abs" style="left:0;top:9.87px;width:153px;height:0.6px;background:#f7f7f7"></div>
<div class="t" style="left:13px;top:2.00px;color:#1a1a1a">Installation</div>
<div class="abs" style="left:0;top:20.53px;width:153px;height:0.6px;background:#f7f7f7"></div>
<div class="t" style="left:23.5px;top:12.67px;color:#1a1a1a">Noeuds</div>
<div class="abs" style="left:0;top:31.20px;width:153px;height:0.6px;background:#f7f7f7"></div>
<div class="t" style="left:23.5px;top:23.33px;color:#1a1a1a">Tuyauteries</div>
<div class="abs" style="left:0;top:41.87px;width:153px;height:0.6px;background:#f7f7f7"></div>
<div class="t" style="left:23.5px;top:34.00px;color:#1a1a1a">Conduits</div>
<div class="abs" style="left:0;top:52.54px;width:153px;height:0.6px;background:#f7f7f7"></div>
<div class="t" style="left:23.5px;top:44.67px;color:#1a1a1a">Plancher chauffant/rafraîchissant</div>
<div class="abs" style="left:0;top:63.20px;width:153px;height:0.6px;background:#f7f7f7"></div>
<div class="t" style="left:13px;top:55.34px;color:#1a1a1a">E. constructifs</div>
<div class="abs" style="left:0;top:73.87px;width:153px;height:0.6px;background:#f7f7f7"></div>
<div class="t" style="left:23.5px;top:66.00px;color:#1a1a1a">Murs</div>
<div class="abs" style="left:0;top:84.54px;width:153px;height:0.6px;background:#f7f7f7"></div>
<div class="t" style="left:23.5px;top:76.67px;color:#1a1a1a">Parois horizontales et inclinées</div>
<div class="abs" style="left:0;top:95.20px;width:153px;height:0.6px;background:#f7f7f7"></div>
<div class="t" style="left:23.5px;top:87.34px;color:#1a1a1a">Dénivelé des planchers</div>
<div class="abs" style="left:0;top:105.87px;width:153px;height:0.6px;background:#f7f7f7"></div>
<div class="t" style="left:23.5px;top:98.00px;color:#1a1a1a">Locaux</div>
<div class="abs" style="left:0;top:116.54px;width:153px;height:0.6px;background:#f7f7f7"></div>
<div class="t" style="left:23.5px;top:108.67px;color:#1a1a1a">Bâtiments proches et limites de ...</div>
<div class="abs" style="left:0;top:127.20px;width:153px;height:0.6px;background:#f7f7f7"></div>
<div class="t" style="left:13px;top:119.34px;color:#1a1a1a">Niveau supérieur</div>
<div class="abs" style="left:0;top:137.87px;width:153px;height:0.6px;background:#f7f7f7"></div>
<div class="t" style="left:13px;top:130.00px;color:#1a1a1a">Niveau inférieur</div>
<div class="abs" style="left:0;top:148.54px;width:153px;height:0.6px;background:#f7f7f7"></div>
<div class="t" style="left:13px;top:140.67px;color:#1a1a1a">Annotations</div>
<div class="abs" style="left:0;top:159.20px;width:153px;height:0.6px;background:#f7f7f7"></div>
<div class="t" style="left:13px;top:151.34px;color:#1a1a1a">Autres installations</div>
<div class="abs" style="left:0;top:169.87px;width:153px;height:0.6px;background:#f7f7f7"></div>
<div class="t" style="left:13px;top:162.00px;color:#1a1a1a">Résultats</div>
<svg width="153" height="214" viewBox="0 0 153 214" style="left:0;top:0"><path d="M4.5 4.30 L7.2 6.90 L9.9 4.30" fill="none" stroke="#222" stroke-width="1.15"/><rect x="127.9" y="7.10" width="2.6" height="2.6" fill="#9fb0bd"/><circle cx="129.2" cy="4.90" r="3.1" fill="#f7dc8e"/><circle cx="129.2" cy="4.90" r="1.6" fill="#fbe9ae"/><rect x="140.1" y="1.40" width="6" height="6.5" fill="#4aa9e9"/><rect x="141.7" y="3.40" width="7.2" height="5.9" fill="#3fa2e6" stroke="#8ccbf3" stroke-width="0.4"/><path d="M143.2 7.60 L147 5.20 L145.6 7.60 Z" fill="#fff"/><rect x="141" y="2.30" width="4" height="0.7" fill="#8ccbf3"/><rect x="127.9" y="17.77" width="2.6" height="2.6" fill="#9fb0bd"/><circle cx="129.2" cy="15.57" r="3.1" fill="#f7dc8e"/><circle cx="129.2" cy="15.57" r="1.6" fill="#fbe9ae"/><rect x="140.1" y="12.07" width="6" height="6.5" fill="#4aa9e9"/><rect x="141.7" y="14.07" width="7.2" height="5.9" fill="#3fa2e6" stroke="#8ccbf3" stroke-width="0.4"/><path d="M143.2 18.27 L147 15.87 L145.6 18.27 Z" fill="#fff"/><rect x="141" y="12.97" width="4" height="0.7" fill="#8ccbf3"/><rect x="127.9" y="28.43" width="2.6" height="2.6" fill="#9fb0bd"/><circle cx="129.2" cy="26.23" r="3.1" fill="#f7dc8e"/><circle cx="129.2" cy="26.23" r="1.6" fill="#fbe9ae"/><rect x="140.1" y="22.73" width="6" height="6.5" fill="#4aa9e9"/><rect x="141.7" y="24.73" width="7.2" height="5.9" fill="#3fa2e6" stroke="#8ccbf3" stroke-width="0.4"/><path d="M143.2 28.93 L147 26.53 L145.6 28.93 Z" fill="#fff"/><rect x="141" y="23.63" width="4" height="0.7" fill="#8ccbf3"/><rect x="127.9" y="39.10" width="2.6" height="2.6" fill="#9fb0bd"/><circle cx="129.2" cy="36.90" r="3.1" fill="#f7dc8e"/><circle cx="129.2" cy="36.90" r="1.6" fill="#fbe9ae"/><rect x="140.1" y="33.40" width="6" height="6.5" fill="#4aa9e9"/><rect x="141.7" y="35.40" width="7.2" height="5.9" fill="#3fa2e6" stroke="#8ccbf3" stroke-width="0.4"/><path d="M143.2 39.60 L147 37.20 L145.6 39.60 Z" fill="#fff"/><rect x="141" y="34.30" width="4" height="0.7" fill="#8ccbf3"/><rect x="127.9" y="49.77" width="2.6" height="2.6" fill="#9fb0bd"/><circle cx="129.2" cy="47.57" r="3.1" fill="#f7dc8e"/><circle cx="129.2" cy="47.57" r="1.6" fill="#fbe9ae"/><rect x="140.1" y="44.07" width="6" height="6.5" fill="#4aa9e9"/><rect x="141.7" y="46.07" width="7.2" height="5.9" fill="#3fa2e6" stroke="#8ccbf3" stroke-width="0.4"/><path d="M143.2 50.27 L147 47.87 L145.6 50.27 Z" fill="#fff"/><rect x="141" y="44.97" width="4" height="0.7" fill="#8ccbf3"/><path d="M4.5 57.63 L7.2 60.23 L9.9 57.63" fill="none" stroke="#222" stroke-width="1.15"/><rect x="127.9" y="60.44" width="2.6" height="2.6" fill="#9fb0bd"/><circle cx="129.2" cy="58.23" r="3.1" fill="#f7dc8e"/><circle cx="129.2" cy="58.23" r="1.6" fill="#fbe9ae"/><rect x="140.1" y="54.73" width="6" height="6.5" fill="#4aa9e9"/><rect x="141.7" y="56.73" width="7.2" height="5.9" fill="#3fa2e6" stroke="#8ccbf3" stroke-width="0.4"/><path d="M143.2 60.94 L147 58.54 L145.6 60.94 Z" fill="#fff"/><rect x="141" y="55.63" width="4" height="0.7" fill="#8ccbf3"/><rect x="127.9" y="71.10" width="2.6" height="2.6" fill="#9fb0bd"/><circle cx="129.2" cy="68.90" r="3.1" fill="#f7dc8e"/><circle cx="129.2" cy="68.90" r="1.6" fill="#fbe9ae"/><rect x="140.1" y="65.40" width="6" height="6.5" fill="#4aa9e9"/><rect x="141.7" y="67.40" width="7.2" height="5.9" fill="#3fa2e6" stroke="#8ccbf3" stroke-width="0.4"/><path d="M143.2 71.60 L147 69.20 L145.6 71.60 Z" fill="#fff"/><rect x="141" y="66.30" width="4" height="0.7" fill="#8ccbf3"/><rect x="127.9" y="81.77" width="2.6" height="2.6" fill="#9fb0bd"/><circle cx="129.2" cy="79.57" r="3.1" fill="#f7dc8e"/><circle cx="129.2" cy="79.57" r="1.6" fill="#fbe9ae"/><rect x="140.1" y="76.07" width="6" height="6.5" fill="#4aa9e9"/><rect x="141.7" y="78.07" width="7.2" height="5.9" fill="#3fa2e6" stroke="#8ccbf3" stroke-width="0.4"/><path d="M143.2 82.27 L147 79.87 L145.6 82.27 Z" fill="#fff"/><rect x="141" y="76.97" width="4" height="0.7" fill="#8ccbf3"/><rect x="127.9" y="92.44" width="2.6" height="2.6" fill="#9fb0bd"/><circle cx="129.2" cy="90.24" r="3.1" fill="#f7dc8e"/><circle cx="129.2" cy="90.24" r="1.6" fill="#fbe9ae"/><rect x="140.1" y="86.74" width="6" height="6.5" fill="#4aa9e9"/><rect x="141.7" y="88.74" width="7.2" height="5.9" fill="#3fa2e6" stroke="#8ccbf3" stroke-width="0.4"/><path d="M143.2 92.94 L147 90.54 L145.6 92.94 Z" fill="#fff"/><rect x="141" y="87.64" width="4" height="0.7" fill="#8ccbf3"/><rect x="127.9" y="103.10" width="2.6" height="2.6" fill="#9fb0bd"/><circle cx="129.2" cy="100.90" r="3.1" fill="#f7dc8e"/><circle cx="129.2" cy="100.90" r="1.6" fill="#fbe9ae"/><rect x="140.1" y="97.40" width="6" height="6.5" fill="#4aa9e9"/><rect x="141.7" y="99.40" width="7.2" height="5.9" fill="#3fa2e6" stroke="#8ccbf3" stroke-width="0.4"/><path d="M143.2 103.60 L147 101.20 L145.6 103.60 Z" fill="#fff"/><rect x="141" y="98.30" width="4" height="0.7" fill="#8ccbf3"/><rect x="127.9" y="113.77" width="2.6" height="2.6" fill="#9fb0bd"/><circle cx="129.2" cy="111.57" r="3.1" fill="#f7dc8e"/><circle cx="129.2" cy="111.57" r="1.6" fill="#fbe9ae"/><rect x="140.1" y="108.07" width="6" height="6.5" fill="#4aa9e9"/><rect x="141.7" y="110.07" width="7.2" height="5.9" fill="#3fa2e6" stroke="#8ccbf3" stroke-width="0.4"/><path d="M143.2 114.27 L147 111.87 L145.6 114.27 Z" fill="#fff"/><rect x="141" y="108.97" width="4" height="0.7" fill="#8ccbf3"/><path d="M5.2 120.74 L7.3 122.84 L5.2 124.94" fill="none" stroke="#555" stroke-width="0.7"/><rect x="128.1" y="124.44" width="2.2" height="2.4" fill="#bbb"/><circle cx="129.2" cy="122.24" r="2.8" fill="#fafafa" stroke="#bdbdbd" stroke-width="0.6"/><path d="M5.2 131.40 L7.3 133.50 L5.2 135.60" fill="none" stroke="#555" stroke-width="0.7"/><rect x="128.1" y="135.10" width="2.2" height="2.4" fill="#bbb"/><circle cx="129.2" cy="132.90" r="2.8" fill="#fafafa" stroke="#bdbdbd" stroke-width="0.6"/><rect x="128.1" y="145.77" width="2.2" height="2.4" fill="#bbb"/><circle cx="129.2" cy="143.57" r="2.8" fill="#fafafa" stroke="#bdbdbd" stroke-width="0.6"/><path d="M5.2 152.74 L7.3 154.84 L5.2 156.94" fill="none" stroke="#555" stroke-width="0.7"/><rect x="128.1" y="156.44" width="2.2" height="2.4" fill="#bbb"/><circle cx="129.2" cy="154.24" r="2.8" fill="#fafafa" stroke="#bdbdbd" stroke-width="0.6"/><rect x="128.1" y="167.10" width="2.2" height="2.4" fill="#bbb"/><circle cx="129.2" cy="164.91" r="2.8" fill="#fafafa" stroke="#bdbdbd" stroke-width="0.6"/></svg>
</div>
<div class="phdr" style="left:0;top:306px;width:152px"><div class="t">Résultats</div><svg width="20" height="10.6" viewBox="0 0 20 10.6" style="left:132px;top:0"><path d="M2.1 4 L4.5 6.6 L6.9 4" fill="none" stroke="#111" stroke-width="1.15"/><path d="M12.7 3.2 L17.7 7.4 M17.7 3.2 L12.7 7.4" stroke="#111" stroke-width="0.95"/></svg></div>
<div class="phdr" style="left:0;top:355px;width:152px"><div class="t">Vue 3D</div><svg width="20" height="10.6" viewBox="0 0 20 10.6" style="left:132px;top:0"><path d="M2.1 4 L4.5 6.6 L6.9 4" fill="none" stroke="#111" stroke-width="1.15"/><path d="M12.7 3.2 L17.7 7.4 M17.7 3.2 L12.7 7.4" stroke="#111" stroke-width="0.95"/></svg></div>
<div class="abs" id="v3d" style="left:0;top:379.4px;width:152px;height:155px;background:#fff"></div>
<svg id="m3d" width="153" height="155" viewBox="0 379.4 153 155" style="left:0;top:379.4px">
<g transform="translate(0 0.5)">
<path d="M6 404.4 H94 L95.9 396.9 H146.6 V477.6 H113.8 V516.7 H48.1 V473.5 H6 Z" fill="#c7a183"/>
<path d="M7.7 406.1 H95.4 L97.3 398.6 H143.4 V475.9 H112.1 V515 H49.8 V471.8 H7.7 Z" fill="#5e4b3d"/>
<path d="M7.7 406.1 L18.7 414.8 V469.7 L7.7 471.8 Z" fill="#6d5a4b"/>
<path d="M7.7 406.1 H47.8 V414.8 H18.7 Z" fill="#4f4036"/>
<rect x="18.7" y="414.8" width="29.1" height="54.9" fill="#828282"/>
<rect x="47.8" y="407" width="3.4" height="66.5" fill="#b9b5b0"/>
<rect x="51.2" y="407" width="2.6" height="66.5" fill="#6a625c"/>
<rect x="55.6" y="416.7" width="14.2" height="29.8" fill="#c9a66e"/>
<rect x="55.6" y="449.4" width="14.2" height="22.6" fill="#c9a66e"/>
<rect x="55.6" y="474.5" width="14.4" height="5.3" fill="#c9a66e"/>
<path d="M72 416.7 H94.8 V444 L86 454 H72 Z" fill="#c9a66e"/>
<rect x="72.2" y="456.3" width="12.0" height="28.2" fill="#c9a66e"/>
<rect x="55.6" y="484.3" width="23.4" height="18.8" fill="#c9a66e"/>
<path d="M99.5 409.6 H132 V471 H85.5 V456 L88 455.5 L99.5 444 Z" fill="#cba970"/>
<path d="M86.5 474.5 H104.5 V503.1 H81.2 V488 H86.5 Z" fill="#c9a66e"/>
<path d="M132 409.6 L143.4 399 V475.9 L132 471 Z" fill="#64503f"/>
<rect x="133.7" y="424.6" width="5.7" height="16.4" fill="#e9e9ee"/>
<rect x="133.7" y="443" width="5.7" height="17.0" fill="#e9e9ee"/>
<path d="M120 407 L122.5 403.3 H128.5 L126 407 Z" fill="#f4f4f4"/>
<rect x="104" y="407.3" width="9.5" height="1.9" fill="#b08560"/>
<rect x="63" y="411" width="6.5" height="3.0" fill="#f0f0f0"/>
<rect x="55.9" y="411" width="4.1" height="3.0" fill="#c08a60"/>
<rect x="77.2" y="411" width="12.5" height="3.0" fill="#bfa58c"/>
<path d="M104.5 474.5 L110.5 476 V513 L104.5 503.1 Z" fill="#5a4738"/>
<rect x="106.6" y="489" width="1.8" height="6.0" fill="#e6e6ee"/>
<path d="M55.6 503.1 H104.5 L110.5 513 H51 Z" fill="#4a3a30"/>
<rect x="66.2" y="506" width="3.6" height="4.6" fill="#f2f2f2"/>
<rect x="71.2" y="506" width="7.0" height="4.6" fill="#f2f2f2"/>
<rect x="88.7" y="506.2" width="7.8" height="2.0" fill="#9a7050"/>
<rect x="90" y="508.8" width="2.0" height="1.6" fill="#e8dcc8"/>
<rect x="93.5" y="508.8" width="2.0" height="1.6" fill="#e8dcc8"/>
<rect x="59" y="503" width="6.0" height="1.6" fill="#a87850"/>
<rect x="79" y="483.6" width="7.5" height="4.4" fill="#4a3c33"/>
</g>
<rect x="131.2" y="383.6" width="16.4" height="16.8" fill="#fff" stroke="#222" stroke-width="0.5"/>
<text x="139.4" y="393.3" font-size="3.6" font-weight="bold" text-anchor="middle" fill="#000" font-family="Liberation Sans, sans-serif">Dessus</text>
<path d="M11.8 503.4 V510.8" stroke="#22cc22" stroke-width="0.7"/><path d="M15 514.3 H22" stroke="#e02020" stroke-width="0.6"/><path d="M20.8 513.2 L23.2 514.3 L20.8 515.4 Z" fill="#e02020"/>
<text x="11.9" y="502.3" font-size="7.8" font-weight="bold" text-anchor="middle" fill="#1fd01f" font-family="Liberation Sans, sans-serif">Y</text>
<text x="12.3" y="516.8" font-size="7.8" font-weight="bold" text-anchor="middle" fill="#1a1aff" font-family="Liberation Sans, sans-serif">Z</text>
<text x="26.4" y="516.8" font-size="7.8" font-weight="bold" text-anchor="middle" fill="#e81818" font-family="Liberation Sans, sans-serif">X</text>
</svg>
<svg id="tb3d" width="152" height="14.2" viewBox="0 365.3 152 14.2" style="left:0;top:365.3px">
<rect x="0" y="365.3" width="152" height="14.2" fill="#f4f5f7"/>
<rect x="14.5" y="366.6" width="0.6" height="11.6" fill="#dcdcdc"/>
<rect x="30.5" y="366.6" width="0.6" height="11.6" fill="#dcdcdc"/>
<rect x="97.3" y="366.6" width="0.6" height="11.6" fill="#dcdcdc"/>
<path d="M2.2 369.4 H8.6 L10.2 371.2 H3.8 Z" fill="#6ab0d8" stroke="#3a5a78" stroke-width="0.4"/>
<path d="M2.6 372.6 H10.2 M3.4 374.2 H10.4 M4.6 375.8 H10.4" stroke="#4a4a4a" stroke-width="0.65"/><path d="M10.3 371.4 V376.2" stroke="#4a4a4a" stroke-width="0.5"/><path d="M1.8 373.4 H3.6 M2.6 375 H4.4" stroke="#666" stroke-width="0.5"/>
<circle cx="22.5" cy="372.4" r="4.3" fill="#1e86d8"/><rect x="21.8" y="371.4" width="1.5" height="3.4" fill="#fff"/><circle cx="22.5" cy="369.9" r="0.9" fill="#fff"/><rect x="21.2" y="374.4" width="2.7" height="0.7" fill="#fff"/>
<path d="M37.5 373.6 V368.8 M37.5 373.6 L34.7 376.2 M37.5 373.6 L41.6 375.7" stroke="#4a7a9c" stroke-width="0.7" fill="none"/>
<rect x="44.9" y="366.3" width="12.9" height="12.3" fill="#c9e4f6" stroke="#8ec4e8" stroke-width="0.6"/>
<path d="M47.6 369.4 L51.3 368.2 L55.2 369.4 V375 L51.3 377.4 L47.6 375 Z" fill="#a9d6f0" stroke="#3a4a5a" stroke-width="0.7"/><path d="M47.6 369.4 L51.3 370.6 L55.2 369.4 M51.3 370.6 V377.4" fill="none" stroke="#3a4a5a" stroke-width="0.6"/><path d="M47.9 369.8 L51 370.9 V376.8 L47.9 374.8 Z" fill="#e4f2fa"/>
<path d="M61.4 370.4 L63 368.6 H67 V372.6 L65.4 374.4 H61.4 Z" fill="#8ac4e0" stroke="#3a4a5a" stroke-width="0.6"/><path d="M61.4 370.4 H65.4 V374.4 M65.4 370.4 L67 368.6" fill="none" stroke="#3a4a5a" stroke-width="0.5"/><path d="M60 373.4 Q59 376 63.4 376.6 M66.6 375.8 Q69 374.6 67.8 373" fill="none" stroke="#555" stroke-width="0.5"/><path d="M62.6 375.8 L64 376.8 L62.6 377.6 Z" fill="#222"/>
<ellipse cx="76.6" cy="373" rx="4.4" ry="2.1" fill="none" stroke="#555" stroke-width="0.6"/><circle cx="76.9" cy="371.4" r="2" fill="#0a0a0a"/><path d="M78 375.6 L79.6 376.6" stroke="#333" stroke-width="0.6"/>
<ellipse cx="89.5" cy="373.4" rx="4.2" ry="1.9" fill="none" stroke="#444" stroke-width="0.6"/><path d="M89.5 370.4 V375.6" stroke="#444" stroke-width="0.7"/><circle cx="89.5" cy="369.7" r="0.9" fill="#fff" stroke="#444" stroke-width="0.5"/><path d="M91 375.4 L92.4 375 L91.6 376.2 Z" fill="#222"/>
<rect x="102.4" y="369.2" width="6.6" height="6.4" fill="#8ac4e0" stroke="#3a4450" stroke-width="0.7"/><rect x="106" y="369" width="2.8" height="6.8" fill="#f8a0a0" stroke="#f03838" stroke-width="0.6"/><path d="M105.8 369 V376" stroke="#3a4450" stroke-width="0.5"/>
<rect x="115" y="369.2" width="6.8" height="6.4" fill="#8ac4e0" stroke="#3a4450" stroke-width="0.7"/><path d="M115.3 369.5 H121.4 L115.3 375.4 Z" fill="#34e048"/><path d="M114.4 376.2 L122 368.8" stroke="#3a4450" stroke-width="0.4"/>
<rect x="128.2" y="369.2" width="6.2" height="2.6" fill="#9c86e4" stroke="#4a4a70" stroke-width="0.5"/><rect x="128.2" y="372.6" width="6.2" height="3" fill="#8ac4e0" stroke="#3a4450" stroke-width="0.6"/><path d="M127.2 372.2 H135.4" stroke="#333" stroke-width="0.8"/>
<path d="M140 370.4 L143.9 368.2 L147.8 370.4 V374.8 L143.9 377 L140 374.8 Z" fill="#9ab8d8" stroke="#667" stroke-width="0.6"/><path d="M140 370.4 L143.9 372.6 L147.8 370.4 L143.9 368.2 Z" fill="#e8a0a8"/><path d="M143.9 372.6 L147.8 370.4 V374.8 L143.9 377 Z" fill="#8acc8a"/><path d="M140 370.4 L143.9 372.6 V377 M143.9 372.6 L147.8 370.4" fill="none" stroke="#667" stroke-width="0.4"/><path d="M144.8 374.2 L146.8 373" stroke="#2a9a3a" stroke-width="0.8"/><path d="M141 372.6 L142.8 373.6" stroke="#7a60c0" stroke-width="0.8"/>
</svg>
<svg width="160" height="60" viewBox="0 300 160 60" style="left:0;top:300px"><path d="M72.4 303.8 H79.6 M72.4 352.9 H79.6" stroke="#b4b8bc" stroke-width="0.7" stroke-dasharray="0.9 0.9"/><path d="M154.6 302.4 V309.6" stroke="#b4b8bc" stroke-width="0.7" stroke-dasharray="0.9 0.9"/></svg>
<!-- WORK AREA -->
<div class="abs" id="work" style="left:156.5px;top:102.7px;width:868px;height:431.6px;background:#fff"></div>
<svg id="plan" width="1024" height="555" viewBox="0 0 1024 555" style="left:0;top:0">
<defs><clipPath id="bc"><path d="M350.2 138 H658 V111.1 H831.4 V420 H720.5 V522.6 H494 V373.8 H350.2 Z"/></clipPath></defs>
<path d="M350.2 138 H658 V111.1 H831.4 V420 H720.5 V522.6 H494 V373.8 H350.2 Z" fill="#c5ba90" stroke="#95a63a" stroke-width="1"/>
<rect x="357.7" y="145.4" width="136.5" height="220.6" fill="#fffee0" stroke="#66667a" stroke-width="0.7"/>
<path d="M494.2 145.4 L505.7 149.9 V400 H494.2 Z" fill="#e7e3d3"/>
<rect x="505.7" y="149.9" width="63.7" height="250.1" fill="#fffee0" stroke="#66667a" stroke-width="0.7"/>
<path d="M494.2 145.4 V400" stroke="#66667a" stroke-width="0.7"/>
<rect x="571.5" y="149.9" width="96.5" height="250.1" fill="#fffee0" stroke="#66667a" stroke-width="0.7"/>
<rect x="669.7" y="122.9" width="150.0" height="287.1" fill="#fffee0" stroke="#66667a" stroke-width="0.7"/>
<rect x="505.4" y="420" width="99.0" height="91.2" fill="#fffee0" stroke="#66667a" stroke-width="0.7"/>
<rect x="607" y="420" width="102.3" height="91.2" fill="#fffee0" stroke="#66667a" stroke-width="0.7"/>
<path d="M536.5 138.4 V149.9 M567 138.4 V149.9" stroke="#66667a" stroke-width="0.7" fill="none"/>
<path d="M536.5 144 H567" stroke="#3a3a9c" stroke-width="1.3"/>
<path d="M592.8 138.4 V149.9 M644.6 138.4 V149.9" stroke="#66667a" stroke-width="0.7" fill="none"/>
<path d="M592.8 144 H644.6" stroke="#3a3a9c" stroke-width="1.3"/>
<path d="M758.2 111.4 V122.9 M792.3 111.4 V122.9" stroke="#66667a" stroke-width="0.7" fill="none"/>
<path d="M758.2 117 H792.3" stroke="#3a3a9c" stroke-width="1.3"/>
<path d="M549.3 511.2 V522.4 M601.4 511.2 V522.4" stroke="#66667a" stroke-width="0.7" fill="none"/>
<path d="M549.3 517 H570.7" stroke="#3a3a9c" stroke-width="1.3"/>
<path d="M570.7 517 H601.4" stroke="#e8336a" stroke-width="1.3"/>
<path d="M570.7 511.2 V522.4" stroke="#3aa06a" stroke-width="0.6"/>
<path d="M601.4 511.2 V522.4" stroke="#e0406a" stroke-width="0.6"/>
<path d="M640.5 511.2 V522.4 M670.5 511.2 V522.4" stroke="#66667a" stroke-width="0.7" fill="none"/>
<path d="M640.5 517 H670.5" stroke="#3a3a9c" stroke-width="1.3"/>
<path d="M358.8 366 V373.6" stroke="#e8406a" stroke-width="0.6"/><path d="M358.8 373.1 H406" stroke="#7a6ad0" stroke-width="0.6"/>
<path d="M657.6 138.4 V149.9" stroke="#66667a" stroke-width="0.5"/>
<g clip-path="url(#bc)" stroke="#b3c13e" stroke-width="0.6" opacity="0.85" fill="none">
<path d="M140.4 100 L-359.6 600"/>
<path d="M188.9 100 L-311.1 600"/>
<path d="M237.4 100 L-262.6 600"/>
<path d="M286.0 100 L-214.0 600"/>
<path d="M334.5 100 L-165.5 600"/>
<path d="M383.0 100 L-117.0 600"/>
<path d="M431.6 100 L-68.4 600"/>
<path d="M480.1 100 L-19.9 600"/>
<path d="M528.6 100 L28.6 600"/>
<path d="M577.1 100 L77.1 600"/>
<path d="M625.7 100 L125.7 600"/>
<path d="M674.2 100 L174.2 600"/>
<path d="M722.7 100 L222.7 600"/>
<path d="M771.3 100 L271.3 600"/>
<path d="M819.8 100 L319.8 600"/>
<path d="M868.3 100 L368.3 600"/>
<path d="M916.9 100 L416.9 600"/>
<path d="M965.4 100 L465.4 600"/>
<path d="M1013.9 100 L513.9 600"/>
<path d="M1062.4 100 L562.4 600"/>
<path d="M1111.0 100 L611.0 600"/>
<path d="M1159.5 100 L659.5 600"/>
<path d="M1208.0 100 L708.0 600"/>
<path d="M1256.6 100 L756.6 600"/>
<path d="M1305.1 100 L805.1 600"/>
<path d="M1353.6 100 L853.6 600"/>
</g>
<rect x="699.6" y="124.4" width="39.6" height="3.9" fill="#fffbe2" stroke="#bfa968" stroke-width="0.6"/>
<rect x="522.7" y="504.9" width="25.3" height="3.8" fill="#fffbe2" stroke="#bfa968" stroke-width="0.6"/>
<rect x="639.5" y="504.9" width="31" height="3.8" fill="#fffbe2" stroke="#bfa968" stroke-width="0.6"/>
<rect x="517.2" y="154" width="14.9" height="12.3" fill="#fffbe2" stroke="#bfa968" stroke-width="0.7"/><circle cx="525.5" cy="160" r="5" fill="none" stroke="#bfa968" stroke-width="0.7"/><circle cx="520.7" cy="160" r="1.3" fill="#f04a6a"/>
<text x="521.6" y="171.2" font-size="4.6" fill="#b59f66" font-family="Liberation Sans, sans-serif">A1</text>
<text x="716" y="133.2" font-size="4.2" fill="#b59f66" font-family="Liberation Sans, sans-serif">A5</text>
<text x="651" y="503.6" font-size="4.2" fill="#b59f66" font-family="Liberation Sans, sans-serif">A3</text>
<text x="532" y="512.4" font-size="4.2" fill="#b59f66" font-family="Liberation Sans, sans-serif">A4</text>
<g stroke="#3c3ca8" stroke-width="0.6" fill="none">
<path d="M699.6 126.3 L690.4 163.5 L600 205"/>
<path d="M517 159.3 H509 Q507.4 159.3 507.4 161 V195"/>
<path d="M517 160.6 H513 Q511.6 160.6 511.6 162 V169.6"/>
<path d="M512.3 171.5 V195 M512.6 171.5 Q513 183 515.5 195 M512.8 171.5 Q515 184 520 195 M513 171.5 Q518 184 528 195 M513 171.5 Q522 182 548 193"/>
<path d="M520 465 L523 506"/>
<path d="M633.6 465 L640 506"/>
</g>
<path d="M511 159.9 H517.4" stroke="#8d8de0" stroke-width="1.6"/>
<circle cx="512.6" cy="172" r="1" fill="#2e2e9a"/>
<path id="plane" d="M160 520.3 L176.5 523.2 L171.6 525.7 L172.7 530.8 Z M160 520.3 L171.6 525.7" fill="none" stroke="#aab4d2" stroke-width="0.6"/>
</svg>
<!-- FLOATING -->
<div class="abs" id="pal" style="left:208.6px;top:103.3px;width:257.4px;height:158.2px;background:#fcfcfc;border:0.6px solid #979797">
<div class="abs" style="left:0;top:0;width:100%;height:10.4px;background:#666"></div>
<div class="t c" style="left:121.4px;top:1.2px;color:#fff;font-size:5.35px">Unités non autonomes pour climatisation (ventilo-convecteurs)</div>
<div class="t" style="left:12.7px;top:13.70px;color:#1c1c1c;font-size:6.38px">Ventilo-convecteur plafonnier, système à deux tubes, avec distribution par gaines</div>
<div class="t" style="left:12.7px;top:26.50px;color:#1c1c1c;font-size:6.38px">Ventilo-convecteur plafonnier, système à deux tubes, avec distribution par piquages</div>
<div class="t" style="left:12.7px;top:39.30px;color:#1c1c1c;font-size:6.38px">Ventilo-convecteur plafonnier, système à deux tubes, non gainé</div>
<div class="t" style="left:12.7px;top:52.10px;color:#1c1c1c;font-size:6.38px">Ventilo-convecteur à cassette, système à deux tubes</div>
<div class="abs" style="left:0.6px;top:61.90px;width:254.6px;height:12.7px;background:#cce4f7;border:0.6px solid #9fcbea"></div>
<div class="t" style="left:12.7px;top:64.90px;color:#1c1c1c;font-size:6.38px">Ventilo-convecteur mural, système à deux tubes</div>
<div class="t" style="left:12.7px;top:77.70px;color:#1c1c1c;font-size:6.38px">Ventilo-convecteur vertical en console, système à deux tubes</div>
<div class="t" style="left:12.7px;top:93.80px;color:#1c1c1c;font-size:6.38px">Ventilo-convecteur plafonnier, système à quatre tubes, avec distribution par gaines</div>
<div class="t" style="left:12.7px;top:106.60px;color:#1c1c1c;font-size:6.38px">Ventilo-convecteur plafonnier, système à quatre tubes, avec distribution par piquages</div>
<div class="t" style="left:12.7px;top:119.40px;color:#1c1c1c;font-size:6.38px">Ventilo-convecteur plafonnier, système à quatre tubes, non gainé</div>
<div class="t" style="left:12.7px;top:132.20px;color:#1c1c1c;font-size:6.38px">Ventilo-convecteur à cassette, système à quatre tubes</div>
<div class="t" style="left:12.7px;top:145.00px;color:#1c1c1c;font-size:6.38px">Ventilo-convecteur vertical en console, système à quatre tubes</div>
<div class="abs" style="left:0;top:89.50px;width:100%;height:0.6px;background:#c8c8c8"></div>
</div>
<svg id="picons" width="257" height="158" viewBox="208.6 103.3 257 158" style="left:208.6px;top:103.3px">
<rect x="213" y="106.2" width="5.8" height="5.2" fill="none" stroke="#fff" stroke-width="0.7"/><path d="M213 107 H218.8" stroke="#fff" stroke-width="0.9"/>
<path d="M440.4 108.9 H443.2 M443.3 106.5 V111.7 M443.3 107.3 H447.6 V110.1 H443.3 M443.3 110.5 H447.8" fill="none" stroke="#fff" stroke-width="0.75"/>
<path d="M456 106.8 L460.7 111.4 M460.7 106.8 L456 111.4" stroke="#fff" stroke-width="1.2"/>
<g transform="translate(215.7 121.5)"><path d="M-4.3 -0.4 L-0.8 -4 H4.3 V0.8 L1.2 3.5 H-4.3 Z" fill="#1a1a1a"/><path d="M-4.3 -0.9 H4.3 V0.7 H-4.3 Z" fill="#f0e31c"/><path d="M-0.4 -3.3 H3.3 L0.4 -0.5 H-3.3 Z" fill="#f6f6f6"/><path d="M-3.5 1.6 H0.4" stroke="#f0f0f0" stroke-width="0.7"/><rect x="3.1" y="2" width="1.1" height="2.6" fill="#111"/></g>
<g transform="translate(215.7 201.7)"><path d="M-4.3 -0.4 L-0.8 -4 H4.3 V0.8 L1.2 3.5 H-4.3 Z" fill="#1a1a1a"/><path d="M-4.3 -0.9 H4.3 V0.7 H-4.3 Z" fill="#f0e31c"/><path d="M-0.4 -3.3 H3.3 L0.4 -0.5 H-3.3 Z" fill="#f6f6f6"/><path d="M-3.5 1.6 H0.4" stroke="#f0f0f0" stroke-width="0.7"/><circle cx="-2.6" cy="2.4" r="0.6" fill="#c030c0"/><rect x="3.1" y="2" width="1.1" height="2.6" fill="#111"/></g>
<g transform="translate(215.7 134.3)"><ellipse cx="-0.2" cy="-0.3" rx="4.2" ry="3.5" fill="#222"/><ellipse cx="-0.2" cy="-1.1" rx="3" ry="1.6" fill="#8a8a8a"/><path d="M-3 -1 H2.6 M-0.2 -2.4 V0.4" stroke="#222" stroke-width="0.5"/><path d="M-3.6 1.2 Q-0.2 3.4 3.4 1.2" fill="none" stroke="#999" stroke-width="0.5"/><rect x="3" y="1.6" width="1.1" height="2.6" fill="#e02030"/></g>
<g transform="translate(215.7 214.6)"><ellipse cx="-0.2" cy="-0.3" rx="4.2" ry="3.5" fill="#222"/><ellipse cx="-0.2" cy="-1.1" rx="3" ry="1.6" fill="#8a8a8a"/><path d="M-3 -1 H2.6 M-0.2 -2.4 V0.4" stroke="#222" stroke-width="0.5"/><path d="M-3.6 1.2 Q-0.2 3.4 3.4 1.2" fill="none" stroke="#999" stroke-width="0.5"/><rect x="3" y="1.6" width="1.1" height="2.6" fill="#e02030"/></g>
<g transform="translate(215.7 147.1)"><path d="M-4.3 -0.4 L-0.8 -4 H4.3 V0.8 L1.2 3.5 H-4.3 Z" fill="#1a1a1a"/><path d="M-0.4 -3.3 H3.3 L0.4 -0.5 H-3.3 Z" fill="#f6f6f6"/><path d="M-3.5 1.6 H0.4" stroke="#f0f0f0" stroke-width="0.7"/><rect x="3.1" y="2" width="1.1" height="2.6" fill="#111"/></g>
<g transform="translate(215.7 227.5)"><path d="M-4.3 -0.4 L-0.8 -4 H4.3 V0.8 L1.2 3.5 H-4.3 Z" fill="#1a1a1a"/><path d="M-0.4 -3.3 H3.3 L0.4 -0.5 H-3.3 Z" fill="#f6f6f6"/><path d="M-3.5 1.6 H0.4" stroke="#f0f0f0" stroke-width="0.7"/><circle cx="-2" cy="1.8" r="0.6" fill="#c030c0"/><rect x="3.1" y="2" width="1.1" height="2.6" fill="#111"/></g>
<g transform="translate(215.7 159.9)"><path d="M-4 1 L-2 -3.4 H3.8 L3.8 1 Z" fill="#1c1c1c"/><path d="M-1.6 -1.8 H3 M-2.2 -0.6 H3" stroke="#ddd" stroke-width="0.5"/><path d="M-4.4 1 H4 V3 H-4.4 Z" fill="#141414"/><path d="M-3.4 1.9 H1.4" stroke="#f2f2f2" stroke-width="0.8"/><rect x="3.6" y="2.6" width="0.9" height="1.8" fill="#222"/></g>
<g transform="translate(215.7 240.3)"><path d="M-4 1 L-2 -3.4 H3.8 L3.8 1 Z" fill="#1c1c1c"/><path d="M-1.6 -1.8 H3 M-2.2 -0.6 H3" stroke="#ddd" stroke-width="0.5"/><path d="M-4.4 1 H4 V3 H-4.4 Z" fill="#141414"/><path d="M-3.4 1.9 H1.4" stroke="#f2f2f2" stroke-width="0.8"/><circle cx="-2.4" cy="1.9" r="0.6" fill="#c030c0"/><rect x="3.6" y="2.6" width="0.9" height="1.8" fill="#222"/></g>
<rect x="212" y="170.7" width="8.4" height="4.2" rx="0.8" fill="#fbfbfb" stroke="#333" stroke-width="0.8"/><path d="M212.8 174 H215.6" stroke="#e02030" stroke-width="0.8"/><path d="M216.2 174 H219.6" stroke="#2a2a6a" stroke-width="0.8"/>
<g transform="translate(215.7 185.5)"><path d="M-3.6 3.2 L-1.4 -2.4 Q-0.6 -3.8 0.8 -3.6 L2.4 -3.2 L1.4 3.4 Z" fill="#fcfcfc" stroke="#555" stroke-width="0.6"/><circle cx="-2" cy="2.2" r="0.6" fill="#c030c0"/><rect x="3.4" y="2" width="0.9" height="1.9" fill="#222"/></g>
<g transform="translate(215.7 253.2)"><path d="M-3.6 3.2 L-1.4 -2.4 Q-0.6 -3.8 0.8 -3.6 L2.4 -3.2 L1.4 3.4 Z" fill="#fcfcfc" stroke="#555" stroke-width="0.6"/><circle cx="-2" cy="2.2" r="0.6" fill="#c030c0"/><rect x="3.4" y="2" width="0.9" height="1.9" fill="#222"/></g>
</svg>
<div class="abs" id="dlg" style="left:0;top:0;width:0;height:0">
<div class="abs" style="left:405.0px;top:191.0px;width:604.0px;height:281.0px;background:#b8cfdc;box-shadow:0 0 0 0.5px #a9c0ce"></div>
<div class="abs" style="left:407.9px;top:207.8px;width:597.9px;height:262.2px;background:#d3dfe7"></div>
<div class="abs" style="left:407.9px;top:207.8px;width:597.9px;height:261.2px;background:#edeef0"></div>
<div class="abs" style="left:407.9px;top:207.8px;width:597.9px;height:240.2px;background:#f3f4f6"></div>
<div class="abs" style="left:412.3px;top:212.2px;width:589.2px;height:231.0px;background:#fff;border:0.6px solid #e0e0e0"></div>
<div class="t c" style="left:681.5px;top:197px;color:#222">Nouveau</div>
<div class="t" style="left:419px;top:222px">Catalogue</div>
<div class="abs" style="left:450.4px;top:218.7px;width:39.3px;height:13.0px;background:#fff;border:0.7px solid #adadad"></div>
<div class="t" style="left:453.7px;top:222.1px">Vaillant</div>
<div class="t" style="left:419px;top:244.2px">Série</div>
<div class="abs" style="left:435.3px;top:241.3px;width:40.7px;height:12.7px;background:#fff;border:0.7px solid #adadad"></div>
<div class="t" style="left:438.4px;top:243.8px">aroVAIR</div>
<div class="abs" style="left:417.0px;top:270.1px;width:580.8px;height:169.5px;background:#fff;border:0.6px solid #dcdcdc"></div>
<div class="abs" style="left:417.6px;top:282.9px;width:577.7px;height:10.8px;background:#cce8ff"></div>
<div class="t" style="left:421.4px;top:273.6px;color:#222">Référence</div>
<div class="abs" style="left:462.5px;top:270.7px;width:0.6px;height:45.3px;background:#efefef"></div>
<div class="t" style="left:466.7px;top:273.6px;color:#222">Puissance frigorifique (W)</div>
<div class="abs" style="left:542.2px;top:270.7px;width:0.6px;height:45.3px;background:#efefef"></div>
<div class="t" style="left:546.4px;top:273.6px;color:#222">Puissance frigorifique sensible (W)</div>
<div class="abs" style="left:646.0px;top:270.7px;width:0.6px;height:45.3px;background:#efefef"></div>
<div class="t" style="left:650.2px;top:273.6px;color:#222">Puissance calorifique (W)</div>
<div class="abs" style="left:722.5px;top:270.7px;width:0.6px;height:45.3px;background:#efefef"></div>
<div class="t" style="left:726.7px;top:273.6px;color:#222">Débit d'eau (m<sup>3</sup>/h)</div>
<div class="abs" style="left:781.9px;top:270.7px;width:0.6px;height:45.3px;background:#efefef"></div>
<div class="t" style="left:786.1px;top:273.6px;color:#222">Débit d'air (l/s)</div>
<div class="abs" style="left:830.6px;top:270.7px;width:0.6px;height:45.3px;background:#efefef"></div>
<div class="t" style="left:834.8px;top:273.6px;color:#222">Puissance sonore (dBA)</div>
<div class="abs" style="left:903.0px;top:270.7px;width:0.6px;height:45.3px;background:#efefef"></div>
<div class="t" style="left:907.2px;top:273.6px;color:#222">Consommation électrique (W)</div>
<div class="abs" style="left:995.3px;top:270.7px;width:0.6px;height:45.3px;background:#efefef"></div>
<div class="t" style="left:421.4px;top:284.7px">VA 1-025 WN</div>
<div class="t" style="left:539.3px;top:284.7px;transform:translateX(-100%)">2700.0</div>
<div class="t" style="left:643.1px;top:284.7px;transform:translateX(-100%)">2150.0</div>
<div class="t" style="left:719.6px;top:284.7px;transform:translateX(-100%)">2940.0</div>
<div class="t" style="left:779.0px;top:284.7px;transform:translateX(-100%)">464.96</div>
<div class="t" style="left:827.7px;top:284.7px;transform:translateX(-100%)">136.7</div>
<div class="t" style="left:900.1px;top:284.7px;transform:translateX(-100%)">33.2</div>
<div class="t" style="left:992.4px;top:284.7px;transform:translateX(-100%)">10.7</div>
<div class="t" style="left:421.4px;top:295.7px">VA 1-035 WN</div>
<div class="t" style="left:539.3px;top:295.7px;transform:translateX(-100%)">3810.0</div>
<div class="t" style="left:643.1px;top:295.7px;transform:translateX(-100%)">3180.0</div>
<div class="t" style="left:719.6px;top:295.7px;transform:translateX(-100%)">4300.0</div>
<div class="t" style="left:779.0px;top:295.7px;transform:translateX(-100%)">656.11</div>
<div class="t" style="left:827.7px;top:295.7px;transform:translateX(-100%)">229.2</div>
<div class="t" style="left:900.1px;top:295.7px;transform:translateX(-100%)">41.2</div>
<div class="t" style="left:992.4px;top:295.7px;transform:translateX(-100%)">33.0</div>
<div class="t" style="left:421.4px;top:306.7px">VA 1-045 WN</div>
<div class="t" style="left:539.3px;top:306.7px;transform:translateX(-100%)">4470.0</div>
<div class="t" style="left:643.1px;top:306.7px;transform:translateX(-100%)">3670.0</div>
<div class="t" style="left:719.6px;top:306.7px;transform:translateX(-100%)">4840.0</div>
<div class="t" style="left:779.0px;top:306.7px;transform:translateX(-100%)">769.77</div>
<div class="t" style="left:827.7px;top:306.7px;transform:translateX(-100%)">239.4</div>
<div class="t" style="left:900.1px;top:306.7px;transform:translateX(-100%)">36.2</div>
<div class="t" style="left:992.4px;top:306.7px;transform:translateX(-100%)">28.0</div>
<div class="abs" style="left:417.6px;top:282.6px;width:577.7px;height:0.6px;background:#e2e2e2"></div>
<div class="abs" style="left:411.9px;top:452.8px;width:41.8px;height:12.8px;background:#e1e1e1;border:1px solid #2a7fd4"></div>
<div class="t c" style="left:432.8px;top:456px">Accepter</div>
<div class="abs" style="left:968.4px;top:452.8px;width:34.3px;height:12.8px;background:#e1e1e1;border:0.6px solid #adadad"></div>
<div class="t c" style="left:985.7px;top:456px">Annuler</div>
<svg width="604" height="281" viewBox="405 191 604 281" style="left:405px;top:191px">
<rect x="965.2" y="197.4" width="5.2" height="5.2" fill="none" stroke="#222" stroke-width="0.7"/>
<path d="M990.6 197.4 L995.6 202.6 M995.6 197.4 L990.6 202.6" stroke="#222" stroke-width="0.75"/>
<path d="M483.3 224.5 L485.3 226.6 L487.3 224.5" fill="none" stroke="#555" stroke-width="0.6"/>
<path d="M469.3 246.8 L471.3 248.9 L473.3 246.8" fill="none" stroke="#555" stroke-width="0.6"/>
<path d="M419.8 265.2 L423.55 261.5 L427.3 265.2 Z" fill="#222"/><path d="M432.4 261.5 L436 265.2 L439.6 261.5 Z" fill="#222"/>
</svg>
</div>
<!-- BOTTOM -->
<div class="abs" id="btabs" style="left:0;top:534.3px;width:1024px;height:11px;background:#f3f4f6">
<div class="abs" style="left:103px;top:0.3px;width:50.5px;height:10.2px;background:#c9e3f6"></div>
<div class="bt" style="left:9px">Thermique</div>
<div class="bt" style="left:59.8px">Acoustique</div>
<div class="bt" style="left:109.6px;font-weight:bold;color:#111">Climatique</div>
<div class="bt" style="left:164.5px">Solaire thermique</div>
<div class="bt" style="left:240.9px">Incendie (FDS)</div>
</div>
<div class="abs" id="status" style="left:0;top:545px;width:1024px;height:10px;background:#f3f4f6">
<svg width="8" height="8" viewBox="0 0 8 8" style="left:4.4px;top:0.5px"><circle cx="4" cy="4" r="3.6" fill="#1e78d2"/><rect x="3.4" y="3.2" width="1.2" height="3" fill="#fff"/><rect x="3.4" y="1.5" width="1.2" height="1.1" fill="#fff"/></svg>
<div class="t" style="left:17.3px;top:0.6px;color:#111;font-size:6.42px">Unités non autonomes pour climatisation (ventilo-convecteurs) - Ventilo-convecteur mural, système à deux tubes</div>
<svg width="10" height="10" viewBox="933 545 10 10" style="left:933px;top:0"><rect x="934.4" y="545.3" width="7.9" height="7.6" fill="#fbf6e6" stroke="#8acbe8" stroke-width="0.8"/><path d="M936 548.6 H940.8" stroke="#d8c8b0" stroke-width="0.5"/><path d="M935.6 551.6 H941.2" stroke="#e04030" stroke-width="0.8"/><path d="M933.8 553.4 H942.9" stroke="#2aa030" stroke-width="0.9"/><path d="M929.7 546 V554 M1015 546 V554" stroke="#e2e4e8" stroke-width="0.6"/></svg>
<div class="t" style="left:947px;top:0.7px;color:#111;transform:scaleX(0.95);transform-origin:0 0">Rez-de-Chaussée</div>
</div>
</body>
</html>
